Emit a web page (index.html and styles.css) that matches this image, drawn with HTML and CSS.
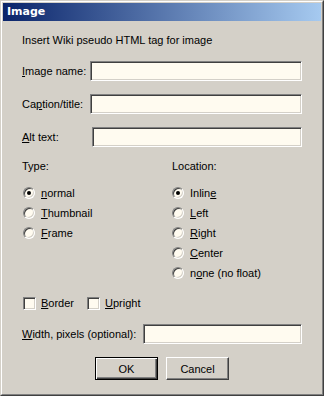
FILE: index.html
```html
<!DOCTYPE html>
<html lang="en">
<head>
  <meta charset="UTF-8" />
  <title>Image</title>
  <link rel="stylesheet" href="styles.css">
</head>
<body>
  <div class="window">
    <div class="window-inner">
      <div class="titlebar">Image</div>
      <div class="content">
        <div class="intro">Insert Wiki pseudo HTML tag for image</div>

        <div class="field first">
          <label class="field-label w68"><u>I</u>mage name:</label>
          <input class="text-input" type="text">
        </div>
        <div class="field">
          <label class="field-label w68">Ca<u>p</u>tion/title:</label>
          <input class="text-input" type="text">
        </div>
        <div class="field">
          <label class="field-label w70"><u>A</u>lt text:</label>
          <input class="text-input" type="text">
        </div>

        <div class="options">
          <div class="group">
            <div class="group-title">Type:</div>
            <div class="radio-list indent">
              <label class="radio-row"><input type="radio" name="type" checked><span><u>n</u>ormal</span></label>
              <label class="radio-row"><input type="radio" name="type"><span><u>T</u>humbnail</span></label>
              <label class="radio-row"><input type="radio" name="type"><span><u>F</u>rame</span></label>
            </div>
          </div>
          <div class="group">
            <div class="group-title">Location:</div>
            <div class="radio-list">
              <label class="radio-row"><input type="radio" name="loc" checked><span>Inlin<u>e</u></span></label>
              <label class="radio-row"><input type="radio" name="loc"><span><u>L</u>eft</span></label>
              <label class="radio-row"><input type="radio" name="loc"><span><u>R</u>ight</span></label>
              <label class="radio-row"><input type="radio" name="loc"><span><u>C</u>enter</span></label>
              <label class="radio-row"><input type="radio" name="loc"><span>n<u>o</u>ne (no float)</span></label>
            </div>
          </div>
        </div>

        <div class="check-row">
          <label class="check"><input type="checkbox"><span><u>B</u>order</span></label>
          <label class="check"><input type="checkbox"><span><u>U</u>pright</span></label>
        </div>

        <div class="field width-row">
          <label class="field-label w121"><u>W</u>idth, pixels (optional):</label>
          <input class="text-input" type="text">
        </div>

        <div class="buttons">
          <button class="btn btn-default">OK</button>
          <button class="btn">Cancel</button>
        </div>
      </div>
    </div>
  </div>
</body>
</html>
```

FILE: styles.css
```css
body {
  margin: 0;
  background: #d4d0c8;
}
.window {
  width: 324px;
  height: 396px;
  box-sizing: border-box;
  border: 1px solid;
  border-color: #d4d0c8 #404040 #404040 #d4d0c8;
  background: #d4d0c8;
  font-family: 'Liberation Sans', Arial, sans-serif;
  font-size: 11px;
  color: #000;
}
.window-inner {
  height: 100%;
  box-sizing: border-box;
  border: 1px solid;
  border-color: #fff #808080 #808080 #fff;
  padding: 1px;
}
.titlebar {
  height: 18px;
  line-height: 18px;
  padding-left: 4px;
  background: linear-gradient(to right, #0a246a, #a6caf0);
  color: #fff;
  font-family: 'DejaVu Sans', Verdana, sans-serif;
  font-weight: bold;
  font-size: 11px;
}
.content {
  padding: 0 19px;
}
.intro {
  margin-top: 13px;
  line-height: 13px;
}
.field {
  display: flex;
  align-items: center;
  height: 20px;
  margin-top: 13px;
}
.field.first {
  margin-top: 14px;
}
.field-label {
  flex: none;
}
.w68 { width: 68px; }
.w70 { width: 70px; }
.w121 { width: 121px; }
.text-input {
  flex: 1;
  min-width: 0;
  height: 20px;
  box-sizing: border-box;
  margin: 0;
  padding: 0 3px;
  border: 1px solid;
  border-color: #808080 #fff #fff #808080;
  box-shadow: inset 1px 1px #404040, inset -1px -1px #d4d0c8;
  background: #fffbf0;
  font: inherit;
  outline: none;
}
.options {
  display: grid;
  grid-template-columns: 150px 1fr;
}
.group-title {
  margin-top: 13px;
  line-height: 13px;
}
.radio-list {
  margin-top: 10px;
}
.radio-row {
  display: flex;
  align-items: center;
  height: 20px;
}
.radio-list.indent .radio-row {
  padding-left: 1px;
}
.radio-row input {
  appearance: none;
  -webkit-appearance: none;
  flex: none;
  width: 12px;
  height: 12px;
  margin: 0 6px 0 0;
  box-sizing: border-box;
  border-radius: 50%;
  border: 1px solid;
  border-color: #808080 #fff #fff #808080;
  box-shadow: inset 1px 1px #404040, inset -1px -1px #d4d0c8;
  background: #fffbf0;
  position: relative;
}
.radio-row input:checked::after {
  content: '';
  position: absolute;
  left: 3px;
  top: 3px;
  width: 4px;
  height: 4px;
  border-radius: 50%;
  background: #000;
}
.check-row {
  display: flex;
  align-items: center;
  gap: 13px;
  height: 20px;
  margin-top: 10px;
  padding-left: 1px;
}
.check {
  display: flex;
  align-items: center;
}
.check input {
  appearance: none;
  -webkit-appearance: none;
  flex: none;
  width: 13px;
  height: 13px;
  margin: 0 5px 0 0;
  box-sizing: border-box;
  border: 1px solid;
  border-color: #808080 #fff #fff #808080;
  box-shadow: inset 1px 1px #404040, inset -1px -1px #d4d0c8;
  background: #fffbf0;
}
.width-row {
  margin-top: 11px;
}
.buttons {
  display: flex;
  justify-content: center;
  gap: 8px;
  margin-top: 13px;
}
.btn {
  width: 63px;
  height: 23px;
  box-sizing: border-box;
  padding: 0;
  border: 1px solid;
  border-color: #fff #404040 #404040 #fff;
  box-shadow: inset -1px -1px #808080;
  background: #d4d0c8;
  font: inherit;
  color: #000;
}
.btn-default {
  border-color: #000;
  box-shadow: inset 1px 1px #fff, inset -1px -1px #404040, inset -2px -2px #808080;
}
```
